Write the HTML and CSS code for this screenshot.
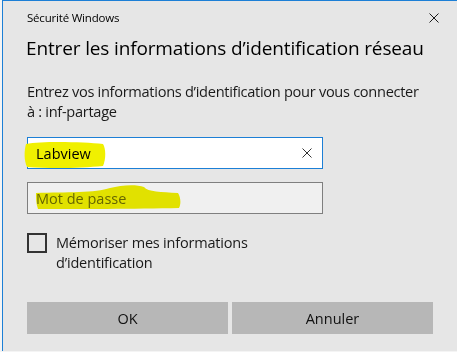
FILE: index.html
```html
<!DOCTYPE html>
<html lang="fr">

<head>
    <meta charset="UTF-8">
    <meta name="viewport" content="width=device-width, initial-scale=1.0">
    <title>Sécurité Windows</title>
    <link rel="stylesheet" href="styles.css">
</head>

<body>
    <div class="dialog">
        <div class="title-bar">
            <span class="title-text">Sécurité Windows</span>
            <svg class="close-btn" width="10" height="10" viewBox="0 0 10 10">
                <path d="M0.5 0.5 L9.5 9.5 M9.5 0.5 L0.5 9.5" stroke="#1a1a1a" stroke-width="1" fill="none" />
            </svg>
        </div>
        <h1 class="heading">Entrer les informations d’identification réseau</h1>
        <p class="intro">Entrez vos informations d’identification pour vous connecter à&nbsp;: inf-partage</p>

        <div class="field field-active">
            <span class="field-value">Labview</span>
            <svg class="clear-btn" width="10" height="10" viewBox="0 0 10 10">
                <path d="M0.5 0.5 L9.5 9.5 M9.5 0.5 L0.5 9.5" stroke="#333" stroke-width="1" fill="none" />
            </svg>
            <!-- surligneur -->
            <svg class="marker marker-user" width="84" height="28" viewBox="0 0 84 28">
                <path d="M3 3 C20 0 60 1 80 3 C83 8 83 18 80 25 C60 27 30 28 4 26 C1 20 1 10 3 3 Z" fill="#f0f000" />
            </svg>
        </div>

        <div class="field field-pass">
            <span class="field-placeholder">Mot de passe</span>
            <svg class="marker marker-pass" width="146" height="26" viewBox="0 0 146 26">
                <path d="M0 9 C30 8 60 9 74 4 C85 1 100 0 108 3 C112 8 125 8 142 9 C145 14 145 20 143 24 C100 25 40 25 2 25 C0 20 0 14 0 9 Z" fill="#f0f000" />
            </svg>
        </div>

        <label class="remember">
            <span class="check-box"></span>
            <span class="remember-text">Mémoriser mes informations d’identification</span>
        </label>

        <div class="buttons">
            <div class="btn">OK</div>
            <div class="btn">Annuler</div>
        </div>
    </div>
</body>

</html>
```
FILE: styles.css
```css
/* base */

html,
body {
    margin: 0;
    padding: 0;
}

body {
    background: #f4f4f4;
    padding-left: 2px;
    font-family: "Open Sans", "Noto Sans", sans-serif;
    color: #000;
}

h1,
p {
    margin: 0;
    padding: 0;
}

/* fenêtre */

.dialog {
    background: #e6e6e6;
    border-top: 1px solid #1c7fd6;
    border-left: 1px solid #1c7fd6;
    height: 351px;
    padding: 0 24px;
    box-sizing: border-box;
}

.title-bar {
    height: 32px;
    display: flex;
    align-items: center;
    justify-content: space-between;
}

.title-text {
    font-size: 11.5px;
    letter-spacing: -0.2px;
    color: #000;
}

.close-btn {
    margin-right: -6px;
    margin-top: 2px;
}

.heading {
    font-weight: 400;
    font-size: 19px;
    line-height: 28px;
    letter-spacing: -0.14px;
    color: #000;
    margin-top: 1px;
    margin-left: -1px;
}

.intro {
    font-size: 14.6px;
    line-height: 20px;
    letter-spacing: -0.3px;
    color: #1a1a1a;
    margin-top: 19px;
    width: 404px;
}

/* champs */

.field {
    position: relative;
    width: 296px;
    height: 32px;
    box-sizing: border-box;
    display: flex;
    align-items: center;
    padding-left: 8px;
    font-size: 14.5px;
}

.field-active {
    margin-top: 16px;
    background: #fff;
    border: 1px solid #1c7fd6;
}

.field-pass {
    margin-top: 13px;
    background: #f0f0f0;
    border: 1px solid #7f7f7f;
}

.field-value {
    position: relative;
    z-index: 1;
    color: #000;
}

.field-placeholder {
    color: #6b6b6b;
}

.clear-btn {
    position: absolute;
    right: 10px;
    top: 10px;
    z-index: 1;
}

.marker {
    position: absolute;
}

.marker-user {
    left: -5px;
    top: 3px;
}

.marker-pass {
    left: 8px;
    top: 1px;
    mix-blend-mode: multiply;
}

/* case à cocher */

.remember {
    display: flex;
    align-items: flex-start;
    margin-top: 19px;
    font-size: 14.5px;
    line-height: 20px;
    color: #1a1a1a;
    letter-spacing: -0.2px;
}

.check-box {
    width: 20px;
    height: 20px;
    box-sizing: border-box;
    border: 2px solid #333;
    flex-shrink: 0;
}

.remember-text {
    margin-left: 9px;
    width: 230px;
}

/* boutons */

.buttons {
    display: flex;
    gap: 4px;
    margin-top: 29px;
}

.btn {
    flex: 1;
    height: 32px;
    background: #b7b7b7;
    font-size: 14.5px;
    display: flex;
    align-items: center;
    justify-content: center;
    color: #111;
}
```
